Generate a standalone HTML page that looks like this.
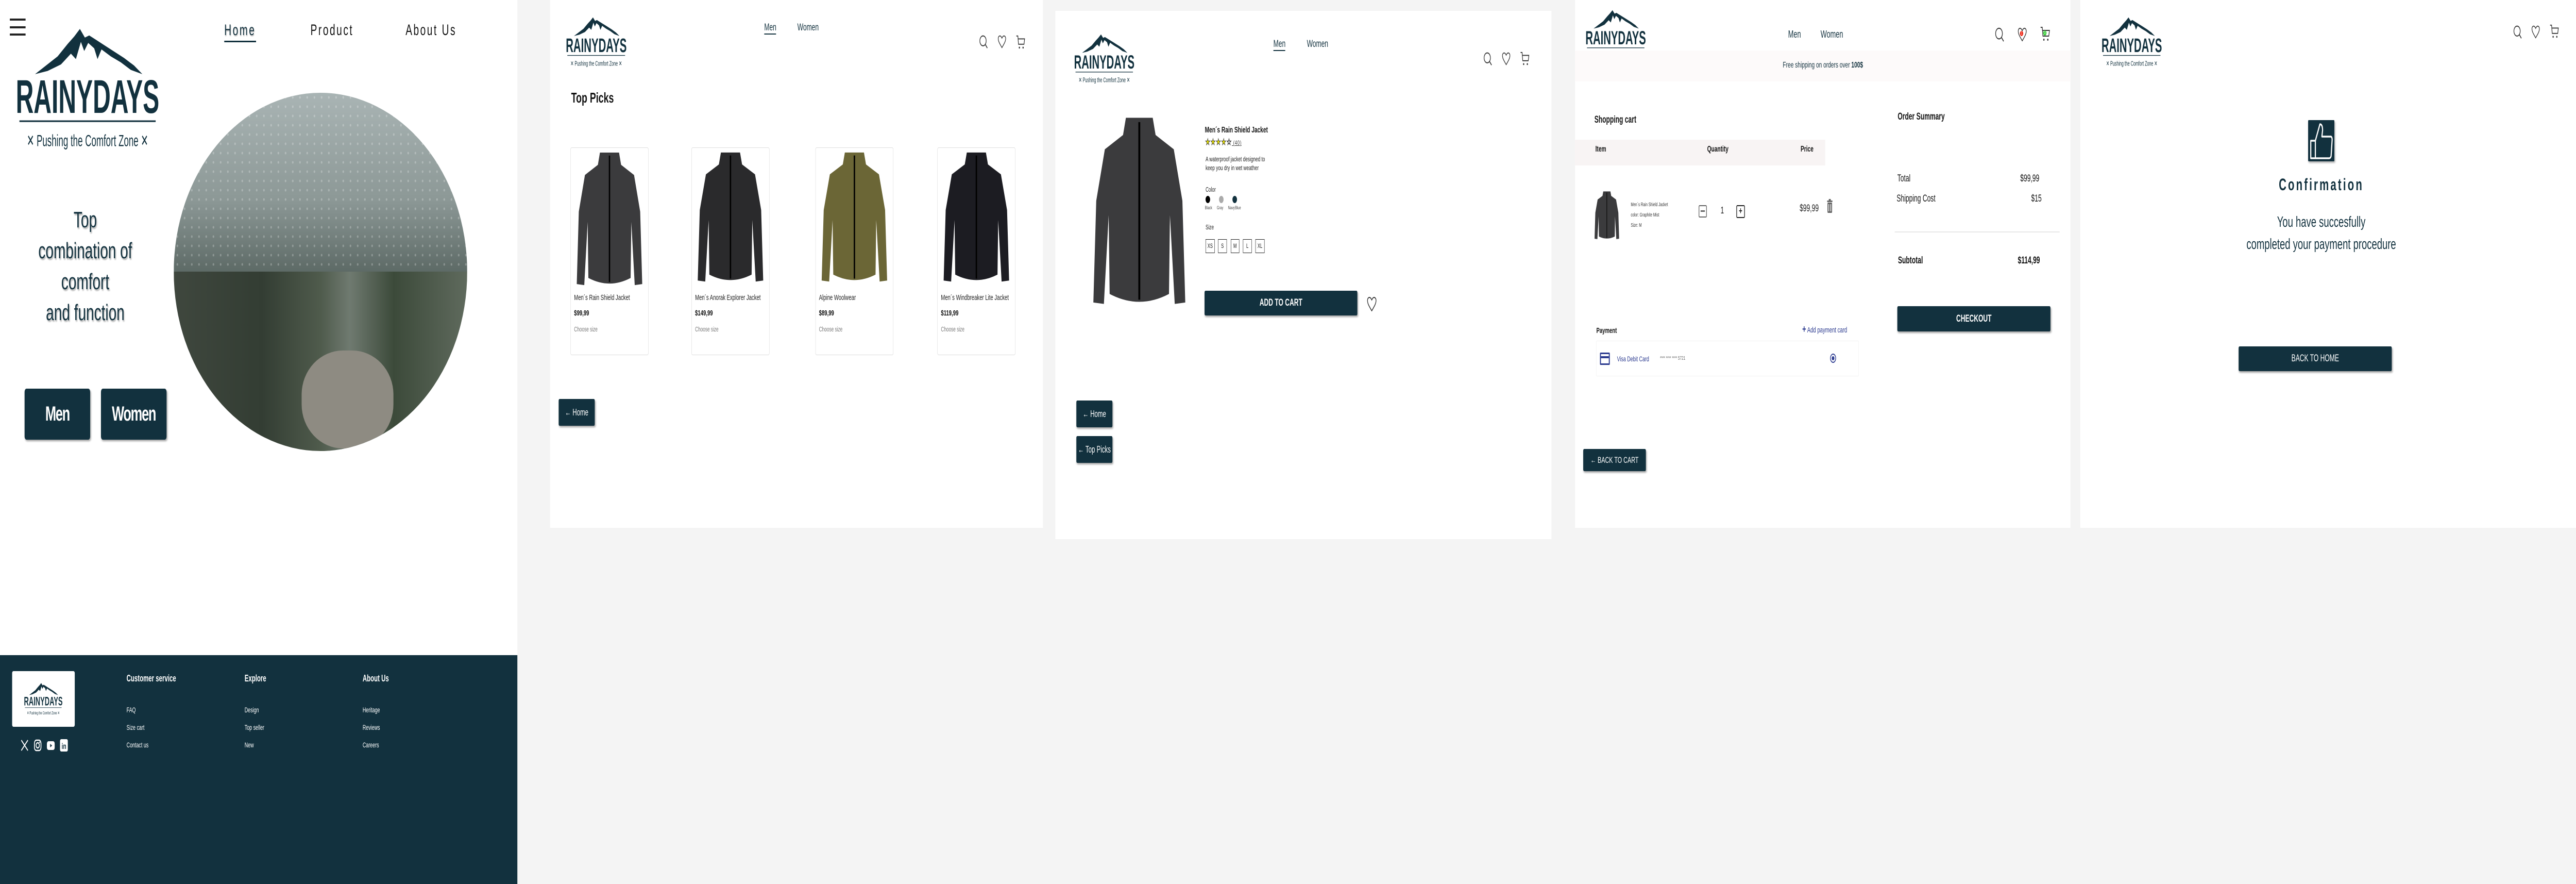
<!DOCTYPE html>
<html style="width:7857px;height:1715px;overflow:hidden"><head><meta charset="utf-8"><style>
*{margin:0;padding:0;box-sizing:border-box}
html,body{overflow:hidden}
body{width:7857px;height:1715px;position:relative;background:#f4f4f4;font-family:"Liberation Sans",sans-serif;color:#12313e;transform-origin:0 0}
.a{position:absolute}
.panel{position:absolute;background:#fff}
.dk{background:#12313e;color:#fff}
.ico{position:absolute}
.btn{position:absolute;background:#12313e;color:#fff;display:flex;align-items:center;justify-content:center;border-radius:3px;box-shadow:2px 3px 4px rgba(0,0,0,.35)}
.card{position:absolute;top:286px;width:238px;height:403px;border:1.5px solid #ddd;border-radius:4px;background:#fff}
.card .t{position:absolute;left:10px;top:279px;font-size:15px;color:#222;line-height:23px;width:220px}
.card .p{font-weight:bold;font-size:15px;margin-top:7px;color:#111}
.card .c{font-size:13px;color:#777;margin-top:8px}
.card svg{position:absolute;left:14px;top:5px}
</style></head><body>
<svg width="0" height="0" style="position:absolute;left:0;top:0">
<symbol id="logo" viewBox="0 0 440 230" preserveAspectRatio="none">
<path d="M62 88 L95 72 L130 55 L160 32 L180 18 L197 4 L212 20 L225 16 L245 24 L270 34 L300 46 L330 58 L360 72 L385 88 L350 80 L320 66 L290 55 L262 42 L250 60 L240 40 L222 30 L210 45 L200 28 L185 60 L170 50 L140 70 L100 82 Z" fill="#12313e"/>
<text x="220" y="160" text-anchor="middle" font-family="Liberation Sans" font-weight="bold" font-size="88" textLength="432" lengthAdjust="spacingAndGlyphs" fill="#12313e">RAINYDAYS</text>
<rect x="15" y="174" width="410" height="3" fill="#12313e"/>
<text x="220" y="222" text-anchor="middle" font-family="Liberation Sans" font-size="30" textLength="365" lengthAdjust="spacingAndGlyphs" fill="#12313e">✕ Pushing the Comfort Zone ✕</text>
</symbol>
<symbol id="srch" viewBox="0 0 32 32"><circle cx="14" cy="14" r="11" fill="none" stroke="#333" stroke-width="2.2"/><path d="M22 22 L29 30" stroke="#333" stroke-width="2.4"/></symbol>
<symbol id="hrt" viewBox="0 0 32 32"><path d="M16 29 C8 20 3 15 3 9 C3 5 6 3 9 3 C12 3 14 5 16 8 C18 5 20 3 23 3 C26 3 29 5 29 9 C29 15 24 20 16 29 Z" fill="none" stroke="#333" stroke-width="2"/></symbol>
<symbol id="cart" viewBox="0 0 32 32"><path d="M2 3 L7 3 L9 20 L27 20 L29 9 L8 9" fill="none" stroke="#333" stroke-width="2"/><circle cx="12" cy="27" r="2" fill="#333"/><circle cx="24" cy="27" r="2" fill="#333"/></symbol>
<symbol id="jk" viewBox="0 0 200 270" preserveAspectRatio="none"><path d="M72 4 L128 4 L134 28 L172 48 L190 120 L196 262 L174 264 L164 140 L162 250 Q100 272 38 250 L36 140 L26 264 L4 262 L10 120 L28 48 L66 28 Z"/><path d="M100 10 L100 258" stroke="#000" stroke-width="4"/></symbol>
</svg>

<!-- PANEL 1 -->
<div class="panel" style="left:0;top:0;width:1578px;height:1271px"></div>
<div class="a" style="left:30px;top:36px;width:48px;height:4px;background:#222"></div>
<div class="a" style="left:30px;top:51px;width:48px;height:4px;background:#222"></div>
<div class="a" style="left:30px;top:65px;width:48px;height:4px;background:#222"></div>
<svg class="a" style="left:44px;top:52px" width="446" height="240"><use href="#logo"/></svg>
<div class="a" style="left:684px;top:42px;font-size:30px;letter-spacing:4px;color:#12313e;text-shadow:1px 2px 2px rgba(0,0,0,.3)">Home</div>
<div class="a" style="left:684px;top:79px;width:97px;height:3px;background:#12313e"></div>
<div class="a" style="left:947px;top:42px;font-size:30px;letter-spacing:4px;color:#111">Product</div>
<div class="a" style="left:1237px;top:42px;font-size:30px;letter-spacing:4px;color:#111">About Us</div>
<div class="a" style="left:60px;top:397px;width:400px;text-align:center;font-size:44px;line-height:60px;color:#12313e;text-shadow:2px 3px 3px rgba(0,0,0,.3)">Top<br>combination of<br>comfort<br>and function</div>
<div class="btn" style="left:75px;top:754px;width:200px;height:99px;border-radius:6px;font-size:40px;font-weight:bold;letter-spacing:-2px">Men</div>
<div class="btn" style="left:308px;top:754px;width:200px;height:99px;border-radius:6px;font-size:40px;font-weight:bold;letter-spacing:-2px">Women</div>
<div class="a" style="left:530px;top:180px;width:895px;height:695px;border-radius:50%;overflow:hidden">
<div class="a" style="left:0;top:0;width:100%;height:347px;background:linear-gradient(#a9b4b4,#8c9896 60%,#5d6a66);"></div>
<div class="a" style="left:0;top:347px;width:100%;height:348px;background:linear-gradient(90deg,#3f473e,#333d33 30%,#4f5b4c 50%,#6f7a70 60%,#3c4a3a 75%,#5f6a5d)"></div>
<div class="a" style="left:390px;top:500px;width:280px;height:190px;border-radius:45%;background:#8e8b82"></div>
<div class="a" style="left:0;top:0;width:100%;height:347px;background:radial-gradient(circle,rgba(255,255,255,.25) 2px,transparent 3px) 0 0/22px 18px"></div>
</div>
<div class="a dk" style="left:0;top:1271px;width:1578px;height:444px"></div>
<div class="a" style="left:37px;top:1302px;width:191px;height:108px;background:#fff;border-radius:4px"></div>
<svg class="a" style="left:72px;top:1324px" width="120" height="64"><use href="#logo"/></svg>
<svg class="a" style="left:63px;top:1434px" width="24" height="24" viewBox="0 0 24 24"><path d="M2 2 L22 22 M22 2 L2 22" stroke="#fff" stroke-width="2.5"/></svg>
<svg class="a" style="left:103px;top:1434px" width="24" height="24" viewBox="0 0 24 24"><rect x="2" y="2" width="20" height="20" rx="6" fill="none" stroke="#fff" stroke-width="2.5"/><circle cx="12" cy="12" r="5" fill="none" stroke="#fff" stroke-width="2.5"/><circle cx="18" cy="6" r="1.5" fill="#fff"/></svg>
<svg class="a" style="left:143px;top:1434px" width="24" height="24" viewBox="0 0 24 24"><rect x="0" y="4" width="24" height="17" rx="5" fill="#fff"/><path d="M10 9 L16 12.5 L10 16 Z" fill="#12313e"/></svg>
<svg class="a" style="left:183px;top:1434px" width="24" height="24" viewBox="0 0 24 24"><rect x="0" y="0" width="24" height="24" rx="4" fill="#fff"/><text x="12" y="19" text-anchor="middle" font-family="Liberation Sans" font-weight="bold" font-size="16" fill="#12313e">in</text></svg>
<div class="a" style="left:386px;top:1306px;color:#fff;font-size:18px;font-weight:bold">Customer service</div>
<div class="a" style="left:386px;top:1360px;color:#fff;font-size:14px;line-height:34px">FAQ<br>Size cart<br>Contact us</div>
<div class="a" style="left:746px;top:1306px;color:#fff;font-size:18px;font-weight:bold">Explore</div>
<div class="a" style="left:746px;top:1360px;color:#fff;font-size:14px;line-height:34px">Design<br>Top seller<br>New</div>
<div class="a" style="left:1106px;top:1306px;color:#fff;font-size:18px;font-weight:bold">About Us</div>
<div class="a" style="left:1106px;top:1360px;color:#fff;font-size:14px;line-height:34px">Heritage<br>Reviews<br>Careers</div>

<!-- PANEL 2 -->
<div class="panel" style="left:1678px;top:0;width:1503px;height:1024px"></div>
<svg class="a" style="left:1724px;top:32px" width="189" height="99"><use href="#logo"/></svg>
<div class="a" style="left:2331px;top:43px;font-size:19px">Men</div>
<div class="a" style="left:2331px;top:65px;width:36px;height:2px;background:#12313e"></div>
<div class="a" style="left:2432px;top:43px;font-size:19px">Women</div>
<svg class="ico" style="left:2986px;top:67px" width="28" height="28"><use href="#srch"/></svg>
<svg class="ico" style="left:3042px;top:67px" width="28" height="28"><use href="#hrt"/></svg>
<svg class="ico" style="left:3098px;top:67px" width="30" height="30"><use href="#cart"/></svg>
<div class="a" style="left:1742px;top:174px;font-size:28px;font-weight:bold;color:#111">Top Picks</div>
<div class="card" style="left:1740px"><svg width="208" height="267" style="fill:#3b3b3d"><use href="#jk"/></svg><div class="t">Men´s Rain Shield Jacket<div class="p">$99,99</div><div class="c">Choose size</div></div></div>
<div class="card" style="left:2109px"><svg width="208" height="260" style="fill:#2a2a2c"><use href="#jk"/></svg><div class="t">Men´s Anorak Explorer Jacket<div class="p">$149,99</div><div class="c">Choose size</div></div></div>
<div class="card" style="left:2487px"><svg width="208" height="260" style="fill:#6b6636"><use href="#jk"/></svg><div class="t">Alpine Woolwear<div class="p">$89,99</div><div class="c">Choose size</div></div></div>
<div class="card" style="left:2859px"><svg width="208" height="260" style="fill:#1c1c22"><use href="#jk"/></svg><div class="t">Men´s Windbreaker Lite Jacket<div class="p">$119,99</div><div class="c">Choose size</div></div></div>
<div class="btn" style="left:1704px;top:774px;width:110px;height:52px;font-size:18px">← Home</div>

<!-- PANEL 3 -->
<div class="panel" style="left:3219px;top:21px;width:1513px;height:1025px"></div>
<svg class="a" style="left:3274px;top:65px" width="188" height="98"><use href="#logo"/></svg>
<div class="a" style="left:3884px;top:75px;font-size:19px">Men</div>
<div class="a" style="left:3884px;top:97px;width:36px;height:2px;background:#12313e"></div>
<div class="a" style="left:3986px;top:75px;font-size:19px">Women</div>
<svg class="ico" style="left:4524px;top:100px" width="28" height="28"><use href="#srch"/></svg>
<svg class="ico" style="left:4580px;top:100px" width="28" height="28"><use href="#hrt"/></svg>
<svg class="ico" style="left:4636px;top:99px" width="30" height="30"><use href="#cart"/></svg>
<svg class="a" style="left:3329px;top:223px;fill:#3b3b3d" width="292" height="375"><use href="#jk"/></svg>
<div class="a" style="left:3675px;top:244px;font-size:16px;font-weight:bold;color:#111">Men´s Rain Shield Jacket</div>
<div class="a" style="left:3676px;top:266px;font-size:17px;color:#e6e000;-webkit-text-stroke:1px #333;letter-spacing:1px">★★★★☆<span style="font-size:12px;color:#333;-webkit-text-stroke:0;text-decoration:underline"> (40)</span></div>
<div class="a" style="left:3677px;top:300px;font-size:13px;line-height:17px;color:#222">A waterproof jacket designed to<br>keep you dry in wet weather</div>
<div class="a" style="left:3677px;top:360px;font-size:13px;color:#222">Color</div>
<div class="a" style="left:3677px;top:380px;width:14px;height:14px;border-radius:50%;background:#000"></div>
<div class="a" style="left:3718px;top:380px;width:14px;height:14px;border-radius:50%;background:#aaa"></div>
<div class="a" style="left:3759px;top:380px;width:14px;height:14px;border-radius:50%;background:#12313e"></div>
<div class="a" style="left:3675px;top:398px;font-size:9px;color:#444;word-spacing:12px">Black Gray Navy&#8202;Blue</div>
<div class="a" style="left:3677px;top:433px;font-size:13px;color:#222">Size</div>
<div class="a" style="left:3677px;top:464px;font-size:12px;color:#111">
<span class="a" style="left:0;width:28px;height:27px;border:1px solid #222;text-align:center;line-height:25px">XS</span>
<span class="a" style="left:38px;width:27px;height:27px;border:1px solid #222;text-align:center;line-height:25px">S</span>
<span class="a" style="left:77px;width:26px;height:27px;border:1px solid #222;text-align:center;line-height:25px">M</span>
<span class="a" style="left:114px;width:27px;height:27px;border:1px solid #222;text-align:center;line-height:25px">L</span>
<span class="a" style="left:152px;width:28px;height:27px;border:1px solid #222;text-align:center;line-height:25px">XL</span></div>
<div class="btn" style="left:3674px;top:564px;width:466px;height:48px;font-size:19px;font-weight:bold">ADD TO CART</div>
<svg class="ico" style="left:4168px;top:574px" width="32" height="32"><use href="#hrt"/></svg>
<div class="btn" style="left:3283px;top:777px;width:110px;height:52px;font-size:18px">← Home</div>
<div class="btn" style="left:3283px;top:846px;width:110px;height:52px;font-size:18px">← Top Picks</div>

<!-- PANEL 4 -->
<div class="panel" style="left:4804px;top:0;width:1511px;height:1024px"></div>
<div class="a" style="left:4834px;top:18px;width:188px;height:78px;overflow:hidden"><svg width="188" height="98"><use href="#logo"/></svg></div>
<div class="a" style="left:5454px;top:56px;font-size:20px">Men</div>
<div class="a" style="left:5553px;top:56px;font-size:20px">Women</div>
<svg class="ico" style="left:6084px;top:52px" width="30" height="30"><use href="#srch"/></svg>
<svg class="ico" style="left:6153px;top:52px" width="30" height="30"><use href="#hrt"/></svg>
<div class="a" style="left:6161px;top:60px;width:10px;height:10px;border-radius:50%;background:#e21;color:#fff;font-size:8px;text-align:center;line-height:10px">1</div>
<svg class="ico" style="left:6222px;top:50px" width="32" height="32"><use href="#cart"/></svg>
<div class="a" style="left:6232px;top:59px;width:10px;height:10px;border-radius:50%;background:#3c3;color:#fff;font-size:8px;text-align:center;line-height:10px">3</div>
<div class="a" style="left:4804px;top:98px;width:1511px;height:60px;background:#fdfafa"></div>
<div class="a" style="left:5300px;top:118px;width:520px;text-align:center;font-size:16px">Free shipping on orders over <b>100$</b></div>
<div class="a" style="left:4863px;top:222px;font-size:19px;font-weight:bold;color:#111">Shopping cart</div>
<div class="a" style="left:4804px;top:271px;width:763px;height:50px;background:#f8f4f4"></div>
<div class="a" style="left:4866px;top:281px;font-size:16px;font-weight:bold;color:#111">Item</div>
<div class="a" style="left:5207px;top:281px;font-size:16px;font-weight:bold;color:#111">Quantity</div>
<div class="a" style="left:5492px;top:281px;font-size:16px;font-weight:bold;color:#111">Price</div>
<svg class="a" style="left:4862px;top:370px;fill:#3b3b3d" width="78" height="96"><use href="#jk"/></svg>
<div class="a" style="left:4974px;top:388px;font-size:10px;line-height:20px;color:#333">Men´s Rain Shield Jacket<br>color: Graphite Mist<br>Size: M</div>
<div class="a" style="left:5181px;top:398px;width:25px;height:24px;border:2.5px solid #666;border-radius:3px"><div style="margin:8px 4px;height:3px;background:#666"></div></div>
<div class="a" style="left:5248px;top:398px;font-size:18px;color:#111">1</div>
<div class="a" style="left:5296px;top:398px;width:26px;height:25px;border:2.5px solid #222;border-radius:3px;text-align:center;font-weight:bold;font-size:18px;line-height:19px;color:#222">+</div>
<div class="a" style="left:5489px;top:394px;font-size:19px;color:#222">$99,99</div>
<svg class="a" style="left:5571px;top:385px" width="20" height="30" viewBox="0 0 20 30"><rect x="2" y="4" width="16" height="3" fill="#666"/><rect x="7" y="1" width="6" height="3" fill="#666"/><rect x="3" y="8" width="14" height="20" rx="2" fill="#666"/><path d="M7 11 V25 M13 11 V25" stroke="#fff" stroke-width="2"/></svg>
<div class="a" style="left:5788px;top:216px;font-size:19px;font-weight:bold;color:#111">Order Summary</div>
<div class="a" style="left:5787px;top:336px;font-size:19px;color:#111">Total</div>
<div class="a" style="left:6120px;top:336px;width:100px;text-align:right;font-size:19px;color:#111">$99,99</div>
<div class="a" style="left:5785px;top:375px;font-size:19px;color:#111">Shipping Cost</div>
<div class="a" style="left:6127px;top:375px;width:100px;text-align:right;font-size:19px;color:#111">$15</div>
<div class="a" style="left:5779px;top:449px;width:503px;height:2px;background:#e8e8e8"></div>
<div class="a" style="left:5789px;top:495px;font-size:19px;font-weight:bold;color:#111">Subtotal</div>
<div class="a" style="left:6122px;top:495px;width:100px;text-align:right;font-size:19px;font-weight:bold;color:#111">$114,99</div>
<div class="btn" style="left:5787px;top:594px;width:467px;height:49px;font-size:19px;font-weight:bold">CHECKOUT</div>
<div class="a" style="left:4869px;top:633px;font-size:15px;font-weight:bold;color:#111">Payment</div>
<div class="a" style="left:5497px;top:628px;font-size:15px;color:#2b3a8f"><b style="font-size:20px">+</b> Add payment card</div>
<div class="a" style="left:4869px;top:661px;width:800px;height:69px;border:1px solid #f2f2f2"></div>
<div class="a" style="left:4880px;top:684px;width:30px;height:24px;border:3px solid #2b3a8f;border-radius:2px"><div style="margin-top:4px;height:4px;background:#2b3a8f"></div></div>
<div class="a" style="left:4932px;top:688px;font-size:14px;color:#2b3a8f">Visa Debit Card</div>
<div class="a" style="left:5063px;top:690px;font-size:10px;color:#666">**** **** **** 5721</div>
<div class="a" style="left:5582px;top:686px;width:18px;height:18px;border:2px solid #2b3a8f;border-radius:50%"><div style="margin:3px;width:8px;height:8px;border-radius:50%;background:#2b3a8f"></div></div>
<div class="btn" style="left:4829px;top:871px;width:191px;height:43px;font-size:17px">← BACK TO CART</div>

<!-- PANEL 5 -->
<div class="panel" style="left:6345px;top:0;width:1512px;height:1024px"></div>
<svg class="a" style="left:6408px;top:32px" width="188" height="99"><use href="#logo"/></svg>
<svg class="ico" style="left:7665px;top:48px" width="28" height="28"><use href="#srch"/></svg>
<svg class="ico" style="left:7720px;top:48px" width="28" height="28"><use href="#hrt"/></svg>
<svg class="ico" style="left:7776px;top:46px" width="30" height="30"><use href="#cart"/></svg>
<div class="a" style="left:7040px;top:233px;width:80px;height:80px;background:#12313e;border-radius:2px;box-shadow:2px 3px 4px rgba(0,0,0,.3)"></div>
<svg class="a" style="left:7040px;top:233px" width="80" height="80" viewBox="0 0 80 80"><path d="M8 40 H22 V74 H8 Z M22 40 L36 8 Q44 8 44 20 L42 32 H70 Q74 34 73 40 L70 70 Q68 74 64 74 H22" fill="none" stroke="#fff" stroke-width="3.5" stroke-linejoin="round"/></svg>
<div class="a" style="left:6830px;top:340px;width:500px;text-align:center;font-size:32px;font-weight:bold;letter-spacing:5px">Confirmation</div>
<div class="a" style="left:6780px;top:410px;width:600px;text-align:center;font-size:29px;line-height:43px">You have succesfully<br>completed your payment procedure</div>
<div class="btn" style="left:6828px;top:672px;width:467px;height:48px;font-size:19px">BACK TO HOME</div>
<script>
(function(){var w=window.innerWidth,h=window.innerHeight;if(w&&w<7800){var sx=w/7857,sy=(h||1715)/1715;document.documentElement.style.width=w+'px';document.body.style.transform='scale('+sx+','+sy+')';}})();
</script>
</body></html>
